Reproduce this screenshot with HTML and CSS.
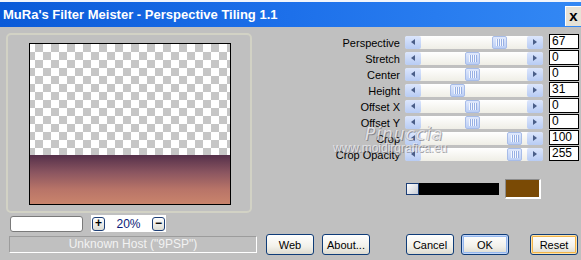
FILE: index.html
```html
<!DOCTYPE html>
<html>

<head>
    <title>Perspective Tiling</title>
    <link rel="stylesheet" href="styles.css">
</head>

<body>
    <div class="window">
        <div class="titlebar">
            <span class="title">MuRa's Filter Meister - Perspective Tiling 1.1</span>
            <span class="close">x</span>
        </div>

        <div class="main">
            <div class="left">
                <div class="groupbox">
                    <div class="preview">
                        <div class="checker"></div>
                        <div class="fade"></div>
                    </div>
                </div>
                <div class="zoom-row">
                    <div class="blank-input"></div>
                    <div class="zoom-box">
                        <span class="mini-btn">+</span>
                        <span class="zoom-value">20%</span>
                        <span class="mini-btn">&minus;</span>
                    </div>
                </div>
            </div>

            <div class="right">
                <div class="slider-row">
                    <span class="label">Perspective</span>
                    <div class="track"><span class="arrow left-arrow"></span><div class="rail"><span class="thumb" style="left: 71px"></span></div><span class="arrow right-arrow"></span></div>
                    <span class="edit">67</span>
                </div>
                <div class="slider-row">
                    <span class="label">Stretch</span>
                    <div class="track"><span class="arrow left-arrow"></span><div class="rail"><span class="thumb" style="left: 44px"></span></div><span class="arrow right-arrow"></span></div>
                    <span class="edit">0</span>
                </div>
                <div class="slider-row">
                    <span class="label">Center</span>
                    <div class="track"><span class="arrow left-arrow"></span><div class="rail"><span class="thumb" style="left: 44px"></span></div><span class="arrow right-arrow"></span></div>
                    <span class="edit">0</span>
                </div>
                <div class="slider-row">
                    <span class="label">Height</span>
                    <div class="track"><span class="arrow left-arrow"></span><div class="rail"><span class="thumb" style="left: 29px"></span></div><span class="arrow right-arrow"></span></div>
                    <span class="edit">31</span>
                </div>
                <div class="slider-row">
                    <span class="label">Offset X</span>
                    <div class="track"><span class="arrow left-arrow"></span><div class="rail"><span class="thumb" style="left: 44px"></span></div><span class="arrow right-arrow"></span></div>
                    <span class="edit">0</span>
                </div>
                <div class="slider-row">
                    <span class="label">Offset Y</span>
                    <div class="track"><span class="arrow left-arrow"></span><div class="rail"><span class="thumb" style="left: 44px"></span></div><span class="arrow right-arrow"></span></div>
                    <span class="edit">0</span>
                </div>
                <div class="slider-row">
                    <span class="label">Crop</span>
                    <div class="track"><span class="arrow left-arrow"></span><div class="rail"><span class="thumb" style="left: 86px"></span></div><span class="arrow right-arrow"></span></div>
                    <span class="edit">100</span>
                </div>
                <div class="slider-row">
                    <span class="label">Crop Opacity</span>
                    <div class="track"><span class="arrow left-arrow"></span><div class="rail"><span class="thumb" style="left: 86px"></span></div><span class="arrow right-arrow"></span></div>
                    <span class="edit">255</span>
                </div>

                <div class="color-row">
                    <span class="color-knob"></span>
                    <span class="color-bar"></span>
                    <span class="color-swatch"></span>
                </div>
            </div>
        </div>

        <div class="footer">
            <div class="status">Unknown Host ("9PSP")</div>
            <button class="btn btn-web">Web</button>
            <button class="btn btn-about">About...</button>
            <button class="btn btn-cancel">Cancel</button>
            <button class="btn btn-ok">OK</button>
            <button class="btn btn-reset">Reset</button>
        </div>

        <div class="watermark">
            <div class="wm-name">Pinuccia</div>
            <div class="wm-site">www.moidirgrafica.eu</div>
        </div>
    </div>
</body>

</html>
```

FILE: styles.css
```css
body {
    margin: 0;
    background: #fff;
    font-family: "Liberation Sans", Arial, sans-serif;
}

.window {
    position: relative;
    width: 581px;
    height: 260px;
    background: #c0c0c0;
    overflow: hidden;
}

/* title bar */

.titlebar {
    height: 25px;
    border-top: 2px solid #f2f5fb;
    display: flex;
    align-items: center;
    justify-content: space-between;
    background: linear-gradient(to right, #0a5ad8, #1d70ea 50%, #3388f4);
}

.title {
    padding-left: 3px;
    color: #fff;
    font-weight: bold;
    font-size: 13px;
}

.close {
    width: 16px;
    height: 20px;
    margin-top: 2px;
    box-sizing: border-box;
    border-top: 1px solid #fff;
    border-left: 1px solid #fff;
    background: #e6e2d6;
    color: #000;
    font-weight: bold;
    font-size: 15px;
    line-height: 17px;
    text-align: center;
}

/* main area */

.main {
    display: flex;
    height: 207px;
}

.left {
    width: 260px;
    padding: 6px 0 0 6px;
    box-sizing: border-box;
}

.groupbox {
    width: 246px;
    height: 180px;
    box-sizing: border-box;
    border: 2px solid #d2d2c5;
    border-radius: 5px;
    padding: 8px 0 0 21px;
}

.preview {
    width: 202px;
    height: 162px;
    box-sizing: border-box;
    border: 1px solid #000;
    display: flex;
    flex-direction: column;
}

.checker {
    height: 111px;
    background: conic-gradient(#c6c6c6 25%, #fff 0 50%, #c6c6c6 0 75%, #fff 0) -3px 0 / 16px 16px;
}

.fade {
    flex: 1;
    background: linear-gradient(#55304a, #8a5560 35%, #b87468 70%, #c9846c);
}

.zoom-row {
    display: flex;
    align-items: center;
    margin-top: 2px;
    padding-left: 4px;
}

.blank-input {
    width: 73px;
    height: 16px;
    box-sizing: border-box;
    border: 1px solid #7a7a7a;
    border-radius: 3px;
    background: #fff;
}

.zoom-box {
    display: flex;
    align-items: center;
    justify-content: space-between;
    width: 75px;
    height: 17px;
    margin-left: 8px;
    padding: 0 1px;
    box-sizing: border-box;
    background: #fff;
}

.mini-btn {
    width: 13px;
    height: 14px;
    box-sizing: border-box;
    border: 1px solid #1d3f77;
    border-radius: 3px;
    background: linear-gradient(#fff, #dcdcd4);
    font-size: 12px;
    font-weight: bold;
    line-height: 11px;
    text-align: center;
}

.zoom-value {
    color: #0a1a78;
    font-size: 12px;
}

/* sliders */

.right {
    flex: 1;
    padding-top: 7px;
}

.slider-row {
    display: flex;
    align-items: flex-start;
    height: 16px;
}

.label {
    width: 140px;
    text-align: right;
    font-size: 11px;
    line-height: 16px;
    padding-top: 1px;
}

.track {
    display: flex;
    width: 138px;
    height: 13px;
    margin: 2px 0 0 5px;
    border-radius: 3px;
    background: linear-gradient(#fff, #efeee6);
}

.arrow {
    position: relative;
    width: 16px;
    height: 13px;
    border-radius: 2px;
    background: linear-gradient(#dce6fc, #b8ccf4);
}

.arrow::after {
    content: "";
    position: absolute;
    top: 3px;
    left: 6px;
    border-top: 3.5px solid transparent;
    border-bottom: 3.5px solid transparent;
}

.left-arrow::after {
    border-right: 4px solid #4a5e88;
}

.right-arrow::after {
    border-left: 4px solid #4a5e88;
}

.rail {
    position: relative;
    flex: 1;
}

.thumb {
    position: absolute;
    top: 0;
    width: 15px;
    height: 13px;
    box-sizing: border-box;
    border: 1px solid #a7bce8;
    border-radius: 2px;
    background:
        repeating-linear-gradient(to right, #f4f7fe 0 1px, #97b0e4 1px 2px) center / 8px 7px no-repeat,
        linear-gradient(#dfe8fc, #bccff5);
}

.edit {
    width: 30px;
    height: 15px;
    margin-left: 6px;
    box-sizing: border-box;
    border: 1px solid #000;
    background: #fff;
    padding-left: 2px;
    font-size: 12px;
    line-height: 13px;
}

.color-row {
    display: flex;
    align-items: center;
    margin-top: 17px;
    padding-left: 146px;
}

.color-knob {
    width: 13px;
    height: 12px;
    box-sizing: border-box;
    border: 1px solid #1d3f77;
    background: linear-gradient(135deg, #fff, #c7ccd6);
}

.color-bar {
    width: 80px;
    height: 12px;
    background: #000;
}

.color-swatch {
    width: 36px;
    height: 20px;
    margin-left: 6px;
    box-sizing: border-box;
    border-top: 1px solid #8c8c8c;
    border-left: 1px solid #8c8c8c;
    border-bottom: 2px solid #fff;
    border-right: 2px solid #fff;
    background: #7a4a05;
}

/* footer */

.footer {
    display: flex;
    align-items: center;
    height: 21px;
    padding-left: 9px;
}

.status {
    width: 248px;
    height: 17px;
    box-sizing: border-box;
    border-top: 1px solid #9c9c9c;
    border-left: 1px solid #9c9c9c;
    border-bottom: 1px solid #fff;
    border-right: 1px solid #fff;
    color: #f2f2f2;
    font-size: 12px;
    line-height: 15px;
    text-align: center;
}

.btn {
    width: 48px;
    height: 21px;
    padding: 0;
    border: 1px solid #0f3c78;
    border-radius: 3px;
    background: linear-gradient(#fff, #f2f1ea 60%, #dcdad0);
    font-family: "Liberation Sans", Arial, sans-serif;
    font-size: 11px;
    color: #000;
}

.btn-web {
    margin-left: 9px;
}

.btn-about {
    margin-left: 8px;
}

.btn-cancel {
    margin-left: 36px;
}

.btn-ok {
    margin-left: 7px;
    box-shadow: inset 0 0 0 1px #c3d6f8, inset 0 0 0 2px #95b8ef;
}

.btn-reset {
    margin-left: 21px;
    box-shadow: inset 0 0 0 1px #fde2a8, inset 0 0 0 2px #f2b44a;
}

/* watermark over the dialog */

.watermark {
    position: absolute;
    left: 333px;
    top: 124px;
    pointer-events: none;
}

.wm-name {
    padding-left: 32px;
    font-family: "DejaVu Sans", sans-serif;
    font-style: italic;
    font-size: 17px;
    letter-spacing: 1px;
    color: rgba(236, 236, 240, 0.85);
    text-shadow: 1px 1px 0 rgba(90, 90, 100, 0.55), -1px 0 0 rgba(140, 140, 150, 0.4);
}

.wm-site {
    margin-top: -3px;
    font-size: 12px;
    color: rgba(232, 232, 236, 0.85);
    text-shadow: 1px 1px 0 rgba(90, 90, 100, 0.55);
}
```
